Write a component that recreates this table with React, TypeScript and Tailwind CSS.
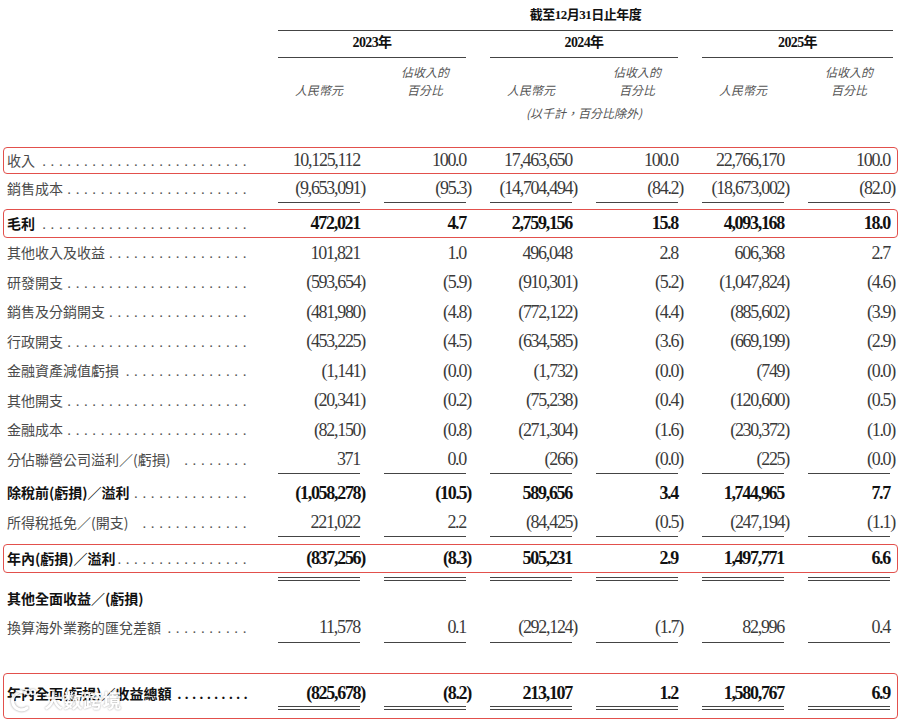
import clsx from 'clsx';

type RowDef = {
    label: string;
    v?: string[];
    bold?: boolean;
    box?: boolean;
    line?: 'single';
    dots?: 'none' | 'bold';
    cls: string;
    total?: boolean;
};

const G = 'grid grid-cols-[250.5px_repeat(6,82px)] gap-x-6';

// rough label width so the dot leader fills the rest of the column
const labelWidth = (s: string) =>
    [...s].reduce((w, c) => w + (c === '(' || c === ')' ? 5 : c === ' ' ? 3.5 : 14), 0);

const dotsFor = (r: RowDef) => {
    const adv = r.dots === 'bold' ? 7.35 : 8.35;
    return '.'.repeat(Math.max(0, Math.floor((242 - labelWidth(r.label)) / adv)));
};

const rows: RowDef[] = [
    { label: '收入 ', v: ['10,125,112', '100.0', '17,463,650', '100.0', '22,766,170', '100.0'], box: true, cls: 'mt-[25.5px] h-[25px]' },
    { label: '銷售成本', v: ['(9,653,091)', '(95.3)', '(14,704,494)', '(84.2)', '(18,673,002)', '(82.0)'], line: 'single', cls: 'mt-[1.5px] h-[29px]' },
    { label: '毛利 ', v: ['472,021', '4.7', '2,759,156', '15.8', '4,093,168', '18.0'], bold: true, box: true, cls: 'mt-[6.5px] h-[27px]' },
    { label: '其他收入及收益', v: ['101,821', '1.0', '496,048', '2.8', '606,368', '2.7'], cls: 'mt-[1.5px] h-[29.5px]' },
    { label: '研發開支', v: ['(593,654)', '(5.9)', '(910,301)', '(5.2)', '(1,047,824)', '(4.6)'], cls: 'h-[29.5px]' },
    { label: '銷售及分銷開支', v: ['(481,980)', '(4.8)', '(772,122)', '(4.4)', '(885,602)', '(3.9)'], cls: 'h-[29.5px]' },
    { label: '行政開支', v: ['(453,225)', '(4.5)', '(634,585)', '(3.6)', '(669,199)', '(2.9)'], cls: 'h-[29.5px]' },
    { label: '金融資產減值虧損', v: ['(1,141)', '(0.0)', '(1,732)', '(0.0)', '(749)', '(0.0)'], cls: 'h-[29.5px]' },
    { label: '其他開支', v: ['(20,341)', '(0.2)', '(75,238)', '(0.4)', '(120,600)', '(0.5)'], cls: 'h-[29.5px]' },
    { label: '金融成本', v: ['(82,150)', '(0.8)', '(271,304)', '(1.6)', '(230,372)', '(1.0)'], cls: 'h-[29.5px]' },
    { label: '分佔聯營公司溢利／(虧損) ', v: ['371', '0.0', '(266)', '(0.0)', '(225)', '(0.0)'], line: 'single', cls: 'h-[29.5px]' },
    { label: '除稅前(虧損)／溢利', v: ['(1,058,278)', '(10.5)', '589,656', '3.4', '1,744,965', '7.7'], bold: true, cls: 'mt-[4px] h-[29px]' },
    { label: '所得稅抵免／(開支) ', v: ['221,022', '2.2', '(84,425)', '(0.5)', '(247,194)', '(1.1)'], line: 'single', cls: 'h-[30px]' },
    { label: '年內(虧損)／溢利', v: ['(837,256)', '(8.3)', '505,231', '2.9', '1,497,771', '6.6'], bold: true, box: true, cls: 'mt-[7.5px] h-[27px]' },
];

const rowsBottom: RowDef[] = [
    { label: '其他全面收益／(虧損)', bold: true, dots: 'none', cls: 'mt-[3.5px] h-[28px]' },
    { label: '換算海外業務的匯兌差額', v: ['11,578', '0.1', '(292,124)', '(1.7)', '82,996', '0.4'], line: 'single', cls: 'h-[31px]' },
];

const total: RowDef = {
    label: '年內全面(虧損)／收益總額 ', v: ['(825,678)', '(8.2)', '213,107', '1.2', '1,580,767', '6.9'],
    bold: true, box: true, dots: 'bold', total: true, cls: 'mt-[30.5px] h-[44px]',
};

const Num = ({ v }: { v: string }) =>
    v.startsWith('(') ? <>{v.slice(0, -1)}<span className="-mr-[5px]">)</span></> : <>{v}</>;

const Label = ({ r }: { r: RowDef }) => (
    <div className={clsx('flex items-baseline pl-[3.5px] pr-[3px] whitespace-nowrap leading-[20px]', r.total ? 'pt-[9.5px]' : 'self-center')}>
        <span className={clsx("shrink-0 font-['Noto_Sans_CJK_TC',sans-serif] text-[14px]", r.bold ? 'font-bold text-[#111]' : 'text-[#4a4a4a]')}>
            {r.label}
        </span>
        {r.dots !== 'none' && (
            <span className="flex-1 min-w-0 flex justify-end">
                <span className={clsx("font-['Liberation_Serif',serif] text-[15px]", r.dots === 'bold' ? 'font-bold tracking-[3.6px] text-[#111]' : 'tracking-[4.6px] text-[#555]')}>
                    {dotsFor(r)}
                </span>
            </span>
        )}
    </div>
);

const numText = "font-['Liberation_Serif',serif] text-[18px] tracking-[-1.3px] leading-[20px] whitespace-nowrap";

const Row = ({ r }: { r: RowDef }) => (
    <div className={clsx('mx-[3.5px]', r.cls, r.box && 'rounded-[3px] outline-[1.5px] outline-solid outline-[#e2504c]')}>
        <div className={clsx(G, 'h-full')}>
            <Label r={r} />
            {(r.v ?? []).map((v, i) =>
                r.total ? (
                    <div key={i} className="flex flex-col items-end pt-[9.5px]">
                        <div className={clsx(numText, 'font-bold text-[#111]')}><Num v={v} /></div>
                        <div className="w-full h-[4px] mt-[3px] border-y border-[#444]" />
                    </div>
                ) : (
                    <div
                        key={i}
                        className={clsx(
                            numText,
                            'flex items-center justify-end h-full',
                            r.bold ? 'font-bold text-[#111]' : 'text-[#3a3a3a]',
                            r.line === 'single' && 'border-b border-[#444]'
                        )}
                    >
                        <span><Num v={v} /></span>
                    </div>
                )
            )}
        </div>
    </div>
);

const Watermark = () => (
    <div className="absolute left-[8px] top-[686px] flex items-center gap-[8px] opacity-90">
        <svg width="28" height="28" viewBox="0 0 28 28" className="drop-shadow-[0_0_1px_rgba(0,0,0,0.45)]">
            <path d="M17 6.5 A9 9 0 1 0 19 22" fill="none" stroke="#fff" strokeWidth="3.2" strokeLinecap="round" />
            <circle cx="20" cy="6" r="2.3" fill="none" stroke="#fff" strokeWidth="1.6" />
            <circle cx="25" cy="6" r="2.3" fill="none" stroke="#fff" strokeWidth="1.6" />
        </svg>
        <span className="font-['Noto_Sans_CJK_SC',sans-serif] font-bold text-[19px] tracking-[0.5px] text-white [text-shadow:0_0_2px_rgba(0,0,0,0.45)]">
            大数跨境
        </span>
    </div>
);

const hdrItalic = "italic font-['Noto_Sans_CJK_TC',sans-serif] text-[12px] text-[#555] leading-[18px] text-center";
const yearCls = "col-span-2 h-full border-b border-[#444] pt-[2px] text-center leading-[20px] font-['Liberation_Serif','Noto_Sans_CJK_TC',serif] font-bold text-[14px] tracking-[-0.6px] text-[#111]";

export default function App() {
    return (
        <div className="relative w-[900px] h-[723px] overflow-hidden bg-white">
            <div className="mx-[3.5px]">
                <div className={clsx(G, 'h-[31px]')}>
                    <div className="col-start-2 col-span-6 -mr-[3px] border-b border-[#444] pt-[5px] text-center leading-[20px] font-['Liberation_Serif','Noto_Sans_CJK_TC',serif] font-bold text-[13px] tracking-[-0.5px] text-[#111]">
                        截至12月31日止年度
                    </div>
                </div>
                <div className={clsx(G, 'h-[27px]')}>
                    <div className={clsx(yearCls, 'col-start-2')}>2023年</div>
                    <div className={yearCls}>2024年</div>
                    <div className={clsx(yearCls, '-mr-[3px]')}>2025年</div>
                </div>
                <div className={clsx(G, 'pt-[5px] h-[41px]')}>
                    {[0, 1, 2].map(i => (
                        <div key={i} className="contents">
                            <div className={clsx(hdrItalic, 'flex items-end justify-center', i === 0 && 'col-start-2')}>人民幣元</div>
                            <div className={hdrItalic}>佔收入的<br />百分比</div>
                        </div>
                    ))}
                </div>
                <div className={clsx(G, 'mt-[5px]')}>
                    <div className={clsx(hdrItalic, 'col-start-4 col-span-2 whitespace-nowrap')}>(以千計，百分比除外)</div>
                </div>
            </div>

            {rows.map(r => <Row key={r.label} r={r} />)}

            <div className="mx-[3.5px] mt-[5px]">
                <div className={clsx(G, 'h-[4px]')}>
                    {[0, 1, 2, 3, 4, 5].map(i => (
                        <div key={i} className={clsx('border-y border-[#444]', i === 0 && 'col-start-2')} />
                    ))}
                </div>
            </div>

            {rowsBottom.map(r => <Row key={r.label} r={r} />)}
            <Row r={total} />

            <Watermark />
        </div>
    );
}
